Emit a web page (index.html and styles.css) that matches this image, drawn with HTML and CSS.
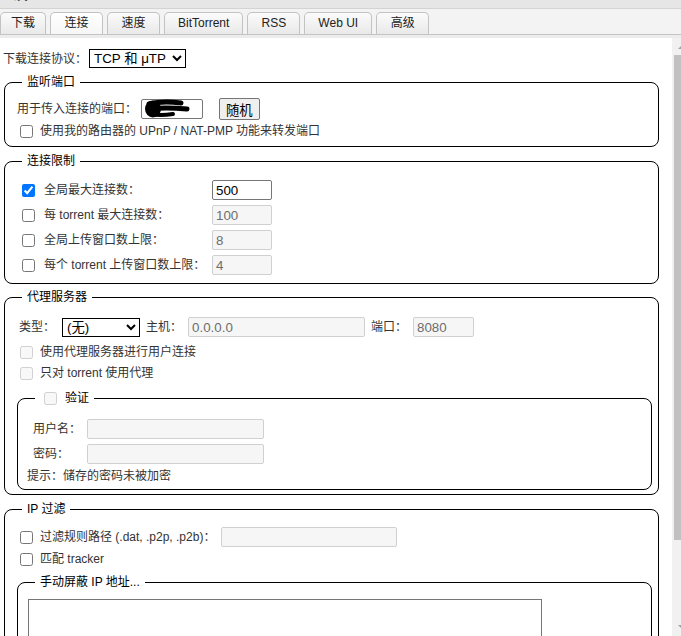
FILE: index.html
```html
<!DOCTYPE html>
<html lang="zh-CN">
<head>
    <meta charset="UTF-8">
    <meta name="viewport" content="width=device-width, initial-scale=1.0">
    <title>设置</title>
    <link rel="stylesheet" href="styles.css">
</head>
<body>
    <div class="titlebar"><span class="title">设置</span></div>
    <ul class="tabbar">
        <li class="tab tab_first">下载</li>
        <li class="tab tab_active">连接</li>
        <li class="tab">速度</li>
        <li class="tab">BitTorrent</li>
        <li class="tab">RSS</li>
        <li class="tab">Web UI</li>
        <li class="tab">高级</li>
    </ul>
    <div class="tab_gap"></div>
    <div class="main">
    <div class="panel">
        <div class="row_top">
            <label>下载连接协议：</label>
            <select class="sel_proto"><option>TCP 和 μTP</option></select>
        </div>

        <fieldset class="box box_listen">
            <legend>监听端口</legend>
            <div class="port_line">
                <label>用于传入连接的端口：</label>
                <span class="port_wrap">
                    <input class="inp inp_port" type="text" value="">
                    <svg class="scribble" width="50" height="20" viewBox="0 0 50 20">
                        <ellipse cx="10" cy="10" rx="8" ry="8.5" fill="#000"/>
                        <path d="M6 5 C18 2 30 3 38 4" stroke="#000" stroke-width="5" stroke-linecap="round" fill="none"/>
                        <path d="M6 10 C20 8 34 9 44 10" stroke="#000" stroke-width="5" stroke-linecap="round" fill="none"/>
                        <path d="M8 15 C16 17 24 16 30 15" stroke="#000" stroke-width="4" stroke-linecap="round" fill="none"/>
                    </svg>
                </span>
                <button class="btn" type="button">随机</button>
            </div>
            <div class="check_line">
                <input class="chk" type="checkbox">
                <label>使用我的路由器的 UPnP / NAT-PMP 功能来转发端口</label>
            </div>
        </fieldset>

        <fieldset class="box box_limits">
            <legend>连接限制</legend>
            <div class="limits_grid">
                <input class="chk chk_grid" type="checkbox" checked>
                <label>全局最大连接数：</label>
                <input class="inp inp_small" type="text" value="500">

                <input class="chk chk_grid" type="checkbox">
                <label>每 torrent 最大连接数：</label>
                <input class="inp inp_small" type="text" value="100" disabled>

                <input class="chk chk_grid" type="checkbox">
                <label>全局上传窗口数上限：</label>
                <input class="inp inp_small" type="text" value="8" disabled>

                <input class="chk chk_grid" type="checkbox">
                <label>每个 torrent 上传窗口数上限：</label>
                <input class="inp inp_small" type="text" value="4" disabled>
            </div>
        </fieldset>

        <fieldset class="box box_proxy">
            <legend>代理服务器</legend>
            <div class="proxy_line">
                <label>类型：</label>
                <select class="sel_type"><option>(无)</option></select>
                <label>主机：</label>
                <input class="inp inp_host" type="text" value="0.0.0.0" disabled>
                <label>端口：</label>
                <input class="inp inp_pport" type="text" value="8080" disabled>
            </div>
            <div class="check_line line_gap7">
                <input class="chk" type="checkbox" disabled>
                <label>使用代理服务器进行用户连接</label>
            </div>
            <div class="check_line line_gap5">
                <input class="chk" type="checkbox" disabled>
                <label>只对 torrent 使用代理</label>
            </div>
            <fieldset class="box inner inner_auth">
                <legend><input class="chk chk_legend" type="checkbox" disabled>验证</legend>
                <div class="auth_grid">
                    <label>用户名：</label>
                    <input class="inp inp_auth" type="text" disabled>
                    <label>密码：</label>
                    <input class="inp inp_auth" type="password" disabled>
                </div>
                <div class="hint">提示：储存的密码未被加密</div>
            </fieldset>
        </fieldset>

        <fieldset class="box box_ip">
            <legend>IP 过滤</legend>
            <div class="filter_line">
                <input class="chk" type="checkbox">
                <label class="filter_label">过滤规则路径 (.dat, .p2p, .p2b)：</label>
                <input class="inp inp_filter" type="text" disabled>
            </div>
            <div class="check_line line_gap4">
                <input class="chk" type="checkbox">
                <label>匹配 tracker</label>
            </div>
            <fieldset class="box inner inner_ban">
                <legend>手动屏蔽 IP 地址...</legend>
                <textarea class="ban_list"></textarea>
            </fieldset>
        </fieldset>
    </div>
    <div class="scrollbar">
        <div class="sb_up"></div>
        <div class="sb_thumb"></div>
        <div class="sb_track"></div>
        <div class="sb_down"></div>
    </div>
    </div>
</body>
</html>
```

FILE: styles.css
```css
*{
    box-sizing: border-box;
}
body{
    margin: 0;
    height: 636px;
    overflow: hidden;
    display: flex;
    flex-direction: column;
    background-color: #ffffff;
    color: #333333;
    font-family: "Liberation Sans", "Noto Sans CJK SC", sans-serif;
    font-size: 12px;
    line-height: 16px;
}
.titlebar{
    height: 9px;
    overflow: hidden;
    background-color: #e6e6e6;
    border-bottom: 1px solid #d3d3d3;
}
.title{
    display: block;
    margin-top: -14px;
    padding-left: 12px;
    font-size: 16px;
    line-height: 16px;
    color: #000;
}
.tabbar{
    display: flex;
    gap: 4px;
    margin: 0;
    padding: 3px 0 0 0;
    list-style: none;
    background-color: #f3f3f3;
    border-bottom: 1px solid #c4c4c4;
}
.tab{
    height: 22px;
    min-width: 53px;
    padding: 0 13px;
    border: 1px solid #c2c2c2;
    border-bottom: none;
    border-radius: 5px 5px 0 0;
    background: linear-gradient(#fbfbfb, #e9e9e9);
    text-align: center;
    line-height: 21px;
    color: #222;
}
.tab_first{
    min-width: 0;
    width: 46px;
    padding: 0;
}
.tab_active{
    background: linear-gradient(#ffffff, #f6f6f6);
}
.tab_gap{
    height: 3px;
    background-color: #ececec;
}
.main{
    flex: 1;
    display: flex;
    min-height: 0;
}
.panel{
    width: 672px;
    flex: none;
    padding: 11px 0 0 3px;
    overflow: hidden;
}

/* form controls */
.inp{
    height: 20px;
    padding: 0 3px;
    border: 1px solid #767676;
    border-radius: 2px;
    background-color: #fff;
    color: #000;
    font-family: "Liberation Sans", "Noto Sans CJK SC", sans-serif;
    font-size: 13.33px;
}
.inp:disabled{
    border-color: #d0d0d0;
    background-color: #f6f6f6;
    color: #6d6d6d;
}
.chk{
    width: 13px;
    height: 13px;
    margin: 0 7px 0 3px;
    flex: none;
}
.btn{
    height: 22px;
    padding: 0 6px;
    border: 1px solid #767676;
    border-radius: 2px;
    background-color: #efefef;
    color: #000;
    font-family: "Liberation Sans", "Noto Sans CJK SC", sans-serif;
    font-size: 13.33px;
}
select{
    height: 19px;
    border: 1px solid #000;
    border-radius: 0;
    background-color: #fff;
    color: #000;
    font-family: "Liberation Sans", "Noto Sans CJK SC", sans-serif;
    font-size: 13.33px;
}

.row_top{
    display: flex;
    align-items: center;
    height: 19px;
}
.sel_proto{
    width: 97px;
    margin-left: 2px;
}

/* fieldsets */
.box{
    min-width: 0;
    margin: 6px 13px 0 1px;
    padding: 8px 6px 7px 12px;
    border: 1px solid #000;
    border-radius: 8px;
}
.box legend{
    margin-left: 5px;
    padding: 0 5px;
    color: #000;
    line-height: 16px;
}
.box_limits{
    padding-bottom: 8px;
}
.box_proxy{
    margin-top: 5px;
    padding-bottom: 4px;
}
.inner{
    margin: 9px 0 0 0;
    padding: 8px 6px 5px 9px;
}
.inner legend{
    margin-left: 8px;
    display: flex;
    align-items: center;
}
.inner_ban{
    margin-top: 7px;
}

.port_line{
    display: flex;
    align-items: center;
    height: 22px;
}
.port_wrap{
    position: relative;
    margin-left: 4px;
    height: 20px;
}
.inp_port{
    width: 62px;
}
.scribble{
    position: absolute;
    left: 2px;
    top: 0;
}
.port_line .btn{
    margin-left: 16px;
}
.check_line{
    display: flex;
    align-items: center;
    height: 16px;
    margin-top: 3px;
}
.line_gap7{
    margin-top: 7px;
}
.line_gap5{
    margin-top: 5px;
}
.line_gap4{
    margin-top: 4px;
}

.limits_grid{
    display: grid;
    grid-template-columns: 27px 168px 60px;
    row-gap: 5px;
    align-items: center;
    margin-top: 3px;
}
.chk_grid{
    margin-left: 5px;
}
.inp_small{
    width: 60px;
}

.proxy_line{
    display: flex;
    align-items: center;
    gap: 6px;
    height: 20px;
    margin: 4px 0 0 2px;
}
.sel_type{
    width: 78px;
    margin-left: 1px;
}
.inp_host{
    width: 177px;
}
.inp_pport{
    width: 61px;
}
.chk_legend{
    margin: 0 8px 0 4px;
}

.auth_grid{
    display: grid;
    grid-template-columns: 60px 177px;
    row-gap: 5px;
    align-items: center;
    margin-top: 5px;
}
.auth_grid label{
    padding-left: 6px;
}
.hint{
    margin-top: 4px;
}

.filter_line{
    display: flex;
    align-items: center;
    height: 20px;
    margin-top: 2px;
}
.filter_label{
    width: 181px;
}
.inp_filter{
    width: 176px;
}
.ban_list{
    display: block;
    width: 514px;
    height: 110px;
    margin: 1px 0 0 1px;
    border: 1px solid #767676;
    resize: none;
}

/* cut-off scrollbar on the right */
.scrollbar{
    width: 9px;
    flex: none;
    display: flex;
    flex-direction: column;
    padding-left: 2px;
    background-color: #f1f1f1;
}
.sb_up{
    height: 17px;
    position: relative;
}
.sb_up::after{
    content: "";
    position: absolute;
    left: 4px;
    top: 8px;
    border-left: 3px solid transparent;
    border-right: 3px solid transparent;
    border-bottom: 3px solid #a3a3a3;
}
.sb_thumb{
    height: 485px;
    background-color: #c1c1c1;
}
.sb_track{
    flex: 1;
}
.sb_down{
    height: 17px;
    position: relative;
}
.sb_down::after{
    content: "";
    position: absolute;
    left: 4px;
    top: 6px;
    border-left: 3px solid transparent;
    border-right: 3px solid transparent;
    border-top: 3px solid #a3a3a3;
}
```
